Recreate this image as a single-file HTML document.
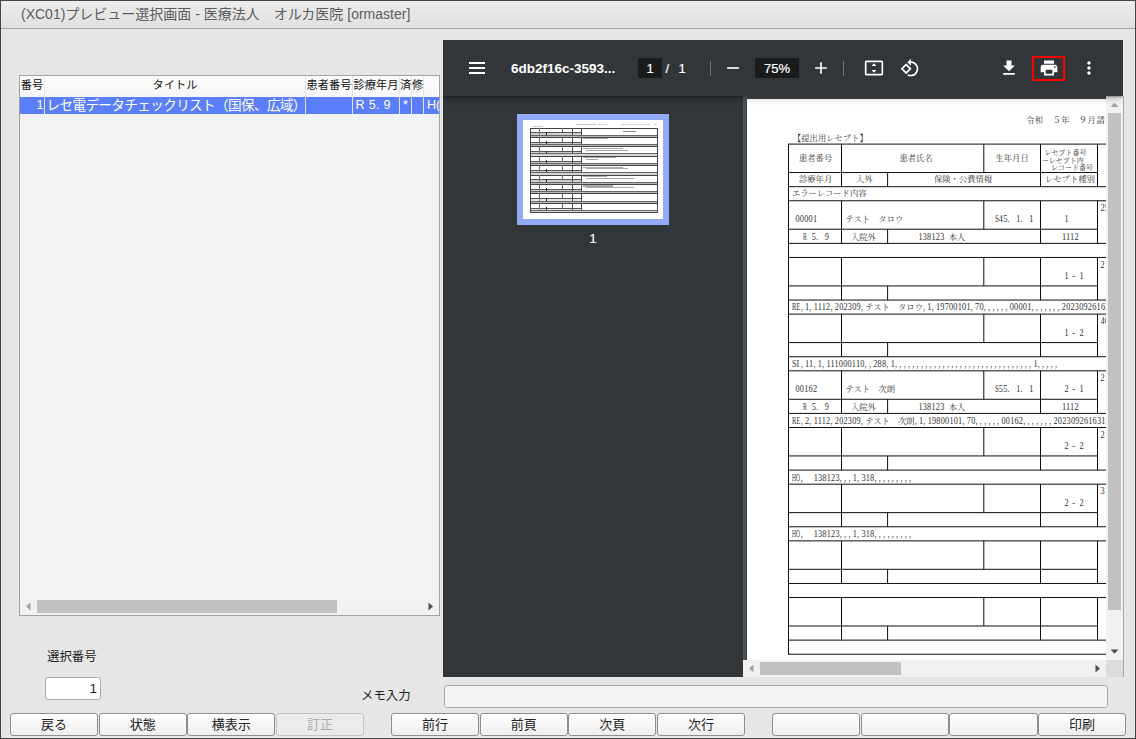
<!DOCTYPE html>
<html lang="ja"><head><meta charset="utf-8"><title>(XC01)プレビュー選択画面</title>
<style>
html,body{margin:0;padding:0}
body{width:1136px;height:739px;overflow:hidden;background:#e6e6e6;position:relative;font-family:"Liberation Sans","Noto Sans CJK JP",sans-serif;color:#222}
.a{position:absolute}
#frame{left:0;top:0;width:1134px;height:737px;border:1px solid #454545;z-index:50;pointer-events:none}
#title{left:1px;top:1px;width:1134px;height:27px;background:linear-gradient(#ececec,#e0e0e0);border-bottom:1px solid #a6a6a6}
#title span{position:absolute;left:20px;top:0;line-height:27px;font-size:14px;color:#5c5c5c;white-space:nowrap}
#list{left:19px;top:75px;width:419px;height:539px;border:1px solid #a2a2a2;background:#f2f2f2;overflow:hidden}
#lhead{left:0;top:0;width:419px;height:21px;background:linear-gradient(#fdfdfd,#f6f6f6)}
.hc{position:absolute;top:-1px;height:21px;line-height:20px;font-size:11.2px;color:#111;text-align:center;white-space:nowrap}
#lrow{left:0;top:21px;width:419px;height:17px;background:#5b7efa}
.rc{position:absolute;top:0;height:17px;line-height:17px;font-size:13.6px;color:#fff;white-space:nowrap}
.vs{position:absolute;top:0;width:1px;height:38px;background:#e4e4e4}
.btn{position:absolute;top:713px;height:20.6px;width:86.2px;border:1px solid #8e8e8e;border-radius:3px;background:linear-gradient(#fdfdfd,#f6f6f6 55%,#ededed);text-align:center;line-height:21.4px;font-size:13px;color:#222;white-space:nowrap}
.btn.dis{color:#a9a9a9;background:#ebebeb;border-color:#c4c4c4}
#pdf{left:443px;top:40px;width:680px;height:637px;background:#525659;overflow:hidden}
#tb{left:0;top:0;width:680px;height:56px;background:#323639;z-index:5;box-shadow:0 -2px 8px rgba(0,0,0,.09),0 4px 8px rgba(0,0,0,.06),0 1px 2px rgba(0,0,0,.3),0 2px 6px rgba(0,0,0,.15)}
#side{left:0;top:56px;width:300px;height:581px;background:#323639}
.ic{position:absolute;width:20px;height:20px;fill:#fff}
.doc{font-family:"Liberation Serif","Noto Serif CJK SC",serif;color:#333;font-size:8.3px;line-height:10px;white-space:nowrap}
.doc .t{position:absolute}
.sb{-webkit-text-stroke:.2px #fff}
.m{letter-spacing:.2px;transform:scaleY(1.18);transform-origin:0 7.8px}.m .c{letter-spacing:2.25px}.m .d{letter-spacing:1.26px}.m .k{display:inline-block;letter-spacing:0;transform:scaleY(.847);transform-origin:0 7.8px}.m .u{display:inline-block;letter-spacing:0;transform-origin:0 50%}
</style></head><body>

<div id="title" class="a"><span>(XC01)プレビュー選択画面 - 医療法人　オルカ医院 [ormaster]</span></div>
<div id="list" class="a">
<div id="lhead" class="a">
<div class="hc" style="left:0px;width:24px">番号</div>
<div class="hc" style="left:25px;width:260px">タイトル</div>
<div class="hc" style="left:286px;width:46px">患者番号</div>
<div class="hc" style="left:333px;width:46px">診療年月</div>
<div class="hc" style="left:380px;width:11px">済</div>
<div class="hc" style="left:392px;width:11px">修</div>
</div>
<div id="lrow" class="a">
<div class="rc" style="left:0;width:23.5px;text-align:right;font-size:12.6px">1</div>
<div class="rc" style="left:26.5px;letter-spacing:-0.63px">レセ電データチェックリスト（国保、広域）</div>
<div class="rc" style="left:335.5px;font-size:12.6px;letter-spacing:0.3px">R 5. 9</div>
<div class="rc" style="left:383px;font-size:12.6px">*</div>
<div class="rc" style="left:407px;font-size:12.6px">H(</div>
</div>
<div class="vs" style="left:24px"></div>
<div class="vs" style="left:285px"></div>
<div class="vs" style="left:332px"></div>
<div class="vs" style="left:379px"></div>
<div class="vs" style="left:391px"></div>
<div class="vs" style="left:403px"></div>
<div class="a" style="left:0;top:522px;width:419px;height:17px;background:#f1f1f1"></div>
<div class="a" style="left:17px;top:524px;width:300px;height:13px;background:#c1c1c1"></div>
<svg class="a" style="left:0;top:522px" width="17" height="17"><path d="M10.5 4.5 L6 8.5 L10.5 12.5Z" fill="#a3a3a3"/></svg>
<svg class="a" style="left:402px;top:522px" width="17" height="17"><path d="M6.5 4.5 L11 8.5 L6.5 12.5Z" fill="#505050"/></svg>
</div>
<div class="a" style="left:47px;top:649px;font-size:12.4px;line-height:16px;color:#222;white-space:nowrap">選択番号</div>
<div class="a" style="left:45px;top:677px;width:54px;height:20.5px;border:1px solid #aaa;border-radius:3px;background:#fff;font-size:13.4px;line-height:21px;text-align:right;"><span style="padding-right:3px">1</span></div>
<div class="a" style="left:361px;top:688px;font-size:12.4px;line-height:16px;color:#222;white-space:nowrap">メモ入力</div>
<div class="a" style="left:444px;top:685px;width:662px;height:21px;border:1px solid #a9a9a9;border-radius:3px;background:#f3f3f3"></div>
<div class="btn" style="left:10px">戻る</div>
<div class="btn" style="left:98.6px">状態</div>
<div class="btn" style="left:187.2px">横表示</div>
<div class="btn dis" style="left:275.8px">訂正</div>
<div class="btn" style="left:391px">前行</div>
<div class="btn" style="left:479.6px">前頁</div>
<div class="btn" style="left:568.2px">次頁</div>
<div class="btn" style="left:656.8px">次行</div>
<div class="btn" style="left:772.2px"></div>
<div class="btn" style="left:860.8px"></div>
<div class="btn" style="left:949.4px"></div>
<div class="btn" style="left:1038px">印刷</div>
<div id="pdf" class="a">
<div class="a doc" style="left:304px;top:59px;width:900px;height:620px;background:#fff;box-shadow:0 0 4px rgba(0,0,0,.45)">
<svg class="a" style="left:0;top:0" width="900" height="620" viewBox="0 0 900 620"><path fill="none" stroke="#0d0d0d" stroke-width="1" d="M41.5 45.1H553M41.5 73.55H350.3M41.5 87.7H553M94.5 45.1V73.55M236.8 45.1V73.55M293.5 45.1V87.7M350.5 45.1V87.7M94.5 73.55V87.7M140.6 73.55V87.7M41.5 101.78H553M41.5 130.23H350.3M41.5 144.38H553M94.5 101.78V130.23M236.8 101.78V130.23M293.5 101.78V144.38M350.5 101.78V144.38M94.5 130.23V144.38M140.6 130.23V144.38M41.5 158.46H553M41.5 186.91H350.3M41.5 201.06H553M94.5 158.46V186.91M236.8 158.46V186.91M293.5 158.46V201.06M350.5 158.46V201.06M94.5 186.91V201.06M140.6 186.91V201.06M41.5 215.14H553M41.5 243.59H350.3M41.5 257.74H553M94.5 215.14V243.59M236.8 215.14V243.59M293.5 215.14V257.74M350.5 215.14V257.74M94.5 243.59V257.74M140.6 243.59V257.74M41.5 271.82H553M41.5 300.27H350.3M41.5 314.42H553M94.5 271.82V300.27M236.8 271.82V300.27M293.5 271.82V314.42M350.5 271.82V314.42M94.5 300.27V314.42M140.6 300.27V314.42M41.5 328.5H553M41.5 356.95H350.3M41.5 371.1H553M94.5 328.5V356.95M236.8 328.5V356.95M293.5 328.5V371.1M350.5 328.5V371.1M94.5 356.95V371.1M140.6 356.95V371.1M41.5 385.18H553M41.5 413.63H350.3M41.5 427.78H553M94.5 385.18V413.63M236.8 385.18V413.63M293.5 385.18V427.78M350.5 385.18V427.78M94.5 413.63V427.78M140.6 413.63V427.78M41.5 441.86H553M41.5 470.31H350.3M41.5 484.46H553M94.5 441.86V470.31M236.8 441.86V470.31M293.5 441.86V484.46M350.5 441.86V484.46M94.5 470.31V484.46M140.6 470.31V484.46M41.5 498.54H553M41.5 526.99H350.3M41.5 541.14H553M94.5 498.54V526.99M236.8 498.54V526.99M293.5 498.54V541.14M350.5 498.54V541.14M94.5 526.99V541.14M140.6 526.99V541.14M41.5 555.22H553M41.5 44.6V555.72"/></svg>
<div class="t " style="left:279px;top:16.8px;letter-spacing:0.5px">令和　５年　９月請求分</div>
<div class="t " style="left:46px;top:34.8px;">【提出用レセプト】</div>
<div class="t " style="left:52px;top:55.1px;">患者番号</div>
<div class="t " style="left:152.5px;top:55.1px;">患者氏名</div>
<div class="t " style="left:248.5px;top:55.1px;">生年月日</div>
<div class="t " style="left:297.5px;top:49.1px;font-size:7px">レセプト番号</div>
<div class="t " style="left:295px;top:56.8px;font-size:7px">ーレセプト内</div>
<div class="t " style="left:304px;top:64.1px;font-size:7px">レコード番号</div>
<div class="t " style="left:52px;top:76.1px;">診療年月</div>
<div class="t " style="left:109px;top:76.1px;">入外</div>
<div class="t " style="left:187px;top:76.1px;">保険・公費情報</div>
<div class="t " style="left:298px;top:76.1px;">レセプト種別</div>
<div class="t " style="left:45px;top:90.3px;">エラーレコード内容</div>
<div class="t m" style="left:48.5px;top:116.1px;">00001</div>
<div class="t " style="left:98.5px;top:116.1px;">テスト　タロウ</div>
<div class="t m" style="left:247.5px;top:116.1px;"><span class="u" style="width:4.33px;transform:scaleX(0.83)">S</span>45<span class="c">. </span>1<span class="c">. </span>1</div>
<div class="t m" style="left:317.5px;top:116.1px;">1</div>
<div class="t m" style="left:353.5px;top:104.8px;">25</div>
<div class="t m" style="left:56px;top:133.8px;"><span class="u" style="width:4.33px;transform:scaleX(0.69)">R</span><span class="c"> </span>5<span class="c">. </span>9</div>
<div class="t " style="left:104px;top:133.8px;">入院外</div>
<div class="t m" style="left:171.4px;top:133.8px;">138123<span class="c"> </span><span class="k">本人</span></div>
<div class="t m" style="left:315px;top:133.8px;">1112</div>
<div class="t m" style="left:317.5px;top:172.8px;">1<span class="d"> - </span>1</div>
<div class="t m" style="left:353.5px;top:161.5px;">2</div>
<div class="t m" style="left:45px;top:204.1px;"><span class="u" style="width:8.66px;transform:scaleX(0.77)">RE</span><span class="c">,</span>1<span class="c">,</span>1112<span class="c">,</span>202309<span class="c">,</span><span class="k">テスト　タロウ</span><span class="c">,</span>1<span class="c">,</span>19700101<span class="c">,</span>70<span class="c">,,,,,,</span>00001<span class="c">,,,,,,,</span>20230926163100</div>
<div class="t m" style="left:317.5px;top:229.5px;">1<span class="d"> - </span>2</div>
<div class="t m" style="left:353.5px;top:218.3px;">40</div>
<div class="t m" style="left:45px;top:260.8px;"><span class="u" style="width:8.66px;transform:scaleX(1.00)">SI</span><span class="c">,</span>11<span class="c">,</span>1<span class="c">,</span>111000110<span class="c">,,</span>288<span class="c">,</span>1<span class="c">,,,,,,,,,,,,,,,,,,,,,,,,,,,,,,,,</span>1<span class="c">,,,,,</span></div>
<div class="t m" style="left:48.5px;top:286.1px;">00162</div>
<div class="t " style="left:98.5px;top:286.1px;">テスト　次朗</div>
<div class="t m" style="left:247.5px;top:286.1px;"><span class="u" style="width:4.33px;transform:scaleX(0.83)">S</span>55<span class="c">. </span>1<span class="c">. </span>1</div>
<div class="t m" style="left:317.5px;top:286.1px;">2<span class="d"> - </span>1</div>
<div class="t m" style="left:353.5px;top:275.0px;">2</div>
<div class="t m" style="left:56px;top:303.8px;"><span class="u" style="width:4.33px;transform:scaleX(0.69)">R</span><span class="c"> </span>5<span class="c">. </span>9</div>
<div class="t " style="left:104px;top:303.8px;">入院外</div>
<div class="t m" style="left:171.4px;top:303.8px;">138123<span class="c"> </span><span class="k">本人</span></div>
<div class="t m" style="left:315px;top:303.8px;">1112</div>
<div class="t m" style="left:45px;top:317.6px;"><span class="u" style="width:8.66px;transform:scaleX(0.77)">RE</span><span class="c">,</span>2<span class="c">,</span>1112<span class="c">,</span>202309<span class="c">,</span><span class="k">テスト　次朗</span><span class="c">,</span>1<span class="c">,</span>19800101<span class="c">,</span>70<span class="c">,,,,,,</span>00162<span class="c">,,,,,,,</span>20230926163100</div>
<div class="t m" style="left:317.5px;top:342.8px;">2<span class="d"> - </span>2</div>
<div class="t m" style="left:353.5px;top:331.8px;">2</div>
<div class="t m" style="left:45px;top:374.5px;white-space:pre"><span class="u" style="width:8.66px;transform:scaleX(0.68)">HO</span><span class="c">,  </span>138123<span class="c">,,,</span>1<span class="c">,</span>318<span class="c">,,,,,,,,,</span></div>
<div class="t m" style="left:317.5px;top:399.5px;">2<span class="d"> - </span>2</div>
<div class="t m" style="left:353.5px;top:388.4px;">3</div>
<div class="t m" style="left:45px;top:431.1px;white-space:pre"><span class="u" style="width:8.66px;transform:scaleX(0.68)">HO</span><span class="c">,  </span>138123<span class="c">,,,</span>1<span class="c">,</span>318<span class="c">,,,,,,,,,</span></div>
</div>
<div class="a" style="left:663px;top:56px;width:17px;height:564px;background:#f1f1f1"></div>
<div class="a" style="left:665px;top:73px;width:13px;height:497px;background:#c1c1c1"></div>
<svg class="a" style="left:663px;top:56px" width="17" height="17"><path d="M4.5 11 L8.5 6.8 L12.5 11Z" fill="#a3a3a3"/></svg>
<svg class="a" style="left:663px;top:603px" width="17" height="17"><path d="M4.5 6.5 L8.5 10.8 L12.5 6.5Z" fill="#505050"/></svg>
<div class="a" style="left:300px;top:620px;width:363px;height:17px;background:#f1f1f1"></div>
<div class="a" style="left:317px;top:622px;width:141px;height:13px;background:#c1c1c1"></div>
<svg class="a" style="left:300px;top:620px" width="17" height="17"><path d="M10.5 4.5 L6 8.5 L10.5 12.5Z" fill="#a3a3a3"/></svg>
<svg class="a" style="left:646px;top:620px" width="17" height="17"><path d="M6.5 4.5 L11 8.5 L6.5 12.5Z" fill="#505050"/></svg>
<div class="a" style="left:663px;top:620px;width:17px;height:17px;background:#dcdcdc"></div>
<div id="side" class="a">
<div class="a" style="left:74px;top:18px;width:140px;height:99px;border:6px solid #93aaf7;background:#fff;overflow:hidden">
<div class="a" style="left:6.82px;top:12.26px;width:51.38px;height:2.36px;background:#cfcfcf"></div>
<div class="a" style="left:6.82px;top:14.62px;width:128.58px;height:2.31px;background:#b7b7b7"></div>
<div class="a" style="left:6.82px;top:7.5px;width:128.58px;height:1px;background:#444"></div>
<div class="a" style="left:6.82px;top:12.26px;width:51.38px;height:1px;background:#555"></div>
<div class="a" style="left:6.82px;top:14.62px;width:128.58px;height:1px;background:#666"></div>
<div class="a" style="left:16px;top:7.5px;width:1px;height:4.76px;background:#666"></div>
<div class="a" style="left:39px;top:7.5px;width:1px;height:4.76px;background:#666"></div>
<div class="a" style="left:49px;top:7.5px;width:1px;height:7.12px;background:#4a4a4a"></div>
<div class="a" style="left:58px;top:7.5px;width:1px;height:7.12px;background:#4a4a4a"></div>
<div class="a" style="left:23px;top:11.76px;width:1px;height:2.86px;background:#222"></div>
<div class="a" style="left:16px;top:12.26px;width:1px;height:2.36px;background:#888"></div>
<div class="a" style="left:6.82px;top:21.68px;width:51.38px;height:2.36px;background:#cfcfcf"></div>
<div class="a" style="left:6.82px;top:24.04px;width:128.58px;height:2.31px;background:#b7b7b7"></div>
<div class="a" style="left:6.82px;top:16.93px;width:128.58px;height:1px;background:#444"></div>
<div class="a" style="left:6.82px;top:21.68px;width:51.38px;height:1px;background:#555"></div>
<div class="a" style="left:6.82px;top:24.04px;width:128.58px;height:1px;background:#666"></div>
<div class="a" style="left:16px;top:16.93px;width:1px;height:4.75px;background:#666"></div>
<div class="a" style="left:39px;top:16.93px;width:1px;height:4.75px;background:#666"></div>
<div class="a" style="left:49px;top:16.93px;width:1px;height:7.11px;background:#4a4a4a"></div>
<div class="a" style="left:58px;top:16.93px;width:1px;height:7.11px;background:#4a4a4a"></div>
<div class="a" style="left:23px;top:21.18px;width:1px;height:2.86px;background:#222"></div>
<div class="a" style="left:16px;top:21.68px;width:1px;height:2.36px;background:#888"></div>
<div class="a" style="left:6.82px;top:31.11px;width:51.38px;height:2.36px;background:#cfcfcf"></div>
<div class="a" style="left:6.82px;top:33.47px;width:128.58px;height:2.31px;background:#d4d4d4"></div>
<div class="a" style="left:6.82px;top:26.35px;width:128.58px;height:1px;background:#444"></div>
<div class="a" style="left:6.82px;top:31.11px;width:51.38px;height:1px;background:#555"></div>
<div class="a" style="left:6.82px;top:33.47px;width:128.58px;height:1px;background:#666"></div>
<div class="a" style="left:16px;top:26.35px;width:1px;height:4.76px;background:#666"></div>
<div class="a" style="left:39px;top:26.35px;width:1px;height:4.76px;background:#666"></div>
<div class="a" style="left:49px;top:26.35px;width:1px;height:7.12px;background:#4a4a4a"></div>
<div class="a" style="left:58px;top:26.35px;width:1px;height:7.12px;background:#4a4a4a"></div>
<div class="a" style="left:23px;top:30.61px;width:1px;height:2.86px;background:#222"></div>
<div class="a" style="left:16px;top:31.11px;width:1px;height:2.36px;background:#888"></div>
<div class="a" style="left:6.82px;top:40.53px;width:51.38px;height:2.37px;background:#cfcfcf"></div>
<div class="a" style="left:6.82px;top:42.9px;width:128.58px;height:2.3px;background:#b7b7b7"></div>
<div class="a" style="left:6.82px;top:35.78px;width:128.58px;height:1px;background:#444"></div>
<div class="a" style="left:6.82px;top:40.53px;width:51.38px;height:1px;background:#555"></div>
<div class="a" style="left:6.82px;top:42.9px;width:128.58px;height:1px;background:#666"></div>
<div class="a" style="left:16px;top:35.78px;width:1px;height:4.75px;background:#666"></div>
<div class="a" style="left:39px;top:35.78px;width:1px;height:4.75px;background:#666"></div>
<div class="a" style="left:49px;top:35.78px;width:1px;height:7.12px;background:#4a4a4a"></div>
<div class="a" style="left:58px;top:35.78px;width:1px;height:7.12px;background:#4a4a4a"></div>
<div class="a" style="left:23px;top:40.03px;width:1px;height:2.87px;background:#222"></div>
<div class="a" style="left:16px;top:40.53px;width:1px;height:2.37px;background:#888"></div>
<div class="a" style="left:6.82px;top:49.96px;width:51.38px;height:2.36px;background:#cfcfcf"></div>
<div class="a" style="left:6.82px;top:52.32px;width:128.58px;height:2.31px;background:#d4d4d4"></div>
<div class="a" style="left:6.82px;top:45.2px;width:128.58px;height:1px;background:#444"></div>
<div class="a" style="left:6.82px;top:49.96px;width:51.38px;height:1px;background:#555"></div>
<div class="a" style="left:6.82px;top:52.32px;width:128.58px;height:1px;background:#666"></div>
<div class="a" style="left:16px;top:45.2px;width:1px;height:4.76px;background:#666"></div>
<div class="a" style="left:39px;top:45.2px;width:1px;height:4.76px;background:#666"></div>
<div class="a" style="left:49px;top:45.2px;width:1px;height:7.12px;background:#4a4a4a"></div>
<div class="a" style="left:58px;top:45.2px;width:1px;height:7.12px;background:#4a4a4a"></div>
<div class="a" style="left:23px;top:49.46px;width:1px;height:2.86px;background:#222"></div>
<div class="a" style="left:16px;top:49.96px;width:1px;height:2.36px;background:#888"></div>
<div class="a" style="left:6.82px;top:59.39px;width:51.38px;height:2.36px;background:#cfcfcf"></div>
<div class="a" style="left:6.82px;top:61.75px;width:128.58px;height:2.31px;background:#b7b7b7"></div>
<div class="a" style="left:6.82px;top:54.63px;width:128.58px;height:1px;background:#444"></div>
<div class="a" style="left:6.82px;top:59.39px;width:51.38px;height:1px;background:#555"></div>
<div class="a" style="left:6.82px;top:61.75px;width:128.58px;height:1px;background:#666"></div>
<div class="a" style="left:16px;top:54.63px;width:1px;height:4.76px;background:#666"></div>
<div class="a" style="left:39px;top:54.63px;width:1px;height:4.76px;background:#666"></div>
<div class="a" style="left:49px;top:54.63px;width:1px;height:7.12px;background:#4a4a4a"></div>
<div class="a" style="left:58px;top:54.63px;width:1px;height:7.12px;background:#4a4a4a"></div>
<div class="a" style="left:23px;top:58.89px;width:1px;height:2.86px;background:#222"></div>
<div class="a" style="left:16px;top:59.39px;width:1px;height:2.36px;background:#888"></div>
<div class="a" style="left:6.82px;top:68.81px;width:51.38px;height:2.36px;background:#cfcfcf"></div>
<div class="a" style="left:6.82px;top:71.17px;width:128.58px;height:2.31px;background:#b7b7b7"></div>
<div class="a" style="left:6.82px;top:64.06px;width:128.58px;height:1px;background:#444"></div>
<div class="a" style="left:6.82px;top:68.81px;width:51.38px;height:1px;background:#555"></div>
<div class="a" style="left:6.82px;top:71.17px;width:128.58px;height:1px;background:#666"></div>
<div class="a" style="left:16px;top:64.06px;width:1px;height:4.75px;background:#666"></div>
<div class="a" style="left:39px;top:64.06px;width:1px;height:4.75px;background:#666"></div>
<div class="a" style="left:49px;top:64.06px;width:1px;height:7.11px;background:#4a4a4a"></div>
<div class="a" style="left:58px;top:64.06px;width:1px;height:7.11px;background:#4a4a4a"></div>
<div class="a" style="left:23px;top:68.31px;width:1px;height:2.86px;background:#222"></div>
<div class="a" style="left:16px;top:68.81px;width:1px;height:2.36px;background:#888"></div>
<div class="a" style="left:6.82px;top:78.24px;width:51.38px;height:2.36px;background:#e6e6e6"></div>
<div class="a" style="left:6.82px;top:80.6px;width:128.58px;height:2.31px;background:#b7b7b7"></div>
<div class="a" style="left:6.82px;top:73.48px;width:128.58px;height:1px;background:#444"></div>
<div class="a" style="left:6.82px;top:78.24px;width:51.38px;height:1px;background:#555"></div>
<div class="a" style="left:6.82px;top:80.6px;width:128.58px;height:1px;background:#666"></div>
<div class="a" style="left:16px;top:73.48px;width:1px;height:4.76px;background:#666"></div>
<div class="a" style="left:39px;top:73.48px;width:1px;height:4.76px;background:#666"></div>
<div class="a" style="left:49px;top:73.48px;width:1px;height:7.12px;background:#4a4a4a"></div>
<div class="a" style="left:58px;top:73.48px;width:1px;height:7.12px;background:#4a4a4a"></div>
<div class="a" style="left:23px;top:77.74px;width:1px;height:2.86px;background:#222"></div>
<div class="a" style="left:16px;top:78.24px;width:1px;height:2.36px;background:#888"></div>
<div class="a" style="left:6.82px;top:87.66px;width:51.38px;height:2.36px;background:#e6e6e6"></div>
<div class="a" style="left:6.82px;top:90.02px;width:128.58px;height:2.31px;background:#d4d4d4"></div>
<div class="a" style="left:6.82px;top:82.91px;width:128.58px;height:1px;background:#444"></div>
<div class="a" style="left:6.82px;top:87.66px;width:51.38px;height:1px;background:#555"></div>
<div class="a" style="left:6.82px;top:90.02px;width:128.58px;height:1px;background:#666"></div>
<div class="a" style="left:16px;top:82.91px;width:1px;height:4.75px;background:#666"></div>
<div class="a" style="left:39px;top:82.91px;width:1px;height:4.75px;background:#666"></div>
<div class="a" style="left:49px;top:82.91px;width:1px;height:7.11px;background:#4a4a4a"></div>
<div class="a" style="left:58px;top:82.91px;width:1px;height:7.11px;background:#4a4a4a"></div>
<div class="a" style="left:23px;top:87.16px;width:1px;height:2.86px;background:#222"></div>
<div class="a" style="left:16px;top:87.66px;width:1px;height:2.36px;background:#888"></div>
<div class="a" style="left:6.82px;top:92.33px;width:128.58px;height:1px;background:#444"></div>
<div class="a" style="left:7px;top:7.5px;width:1px;height:85.83px;background:#444"></div>
<div class="a" style="left:134px;top:7.5px;width:1px;height:85.83px;background:#444"></div>
<div class="a" style="left:53px;top:4.2px;width:20px;height:1.2px;background:#c9c9c9"></div>
<div class="a" style="left:75px;top:4.2px;width:10px;height:1.2px;background:#d2d2d2"></div>
<div class="a" style="left:98px;top:4.2px;width:29px;height:1.2px;background:#cfcfcf"></div>
<div class="a" style="left:131px;top:4.2px;width:3px;height:1.2px;background:#d5d5d5"></div>
<div class="a" style="left:10px;top:5.6px;width:10px;height:1px;background:#c8c8c8"></div>
<div class="a" style="left:100px;top:10.6px;width:13px;height:1.2px;background:#8a8a8a"></div>
<div class="a" style="left:60.2px;top:18.33px;width:25px;height:1.1px;background:#a8a8a8"></div>
<div class="a" style="left:60.2px;top:27.75px;width:40px;height:1.1px;background:#a8a8a8"></div>
<div class="a" style="left:63.2px;top:29.55px;width:42px;height:1.1px;background:#a8a8a8"></div>
<div class="a" style="left:60.2px;top:37.18px;width:33px;height:1.1px;background:#a8a8a8"></div>
<div class="a" style="left:63.2px;top:38.980000000000004px;width:12px;height:1.1px;background:#a8a8a8"></div>
<div class="a" style="left:60.2px;top:46.6px;width:40px;height:1.1px;background:#a8a8a8"></div>
<div class="a" style="left:63.2px;top:48.400000000000006px;width:42px;height:1.1px;background:#a8a8a8"></div>
<div class="a" style="left:60.2px;top:56.03px;width:24px;height:1.1px;background:#a8a8a8"></div>
<div class="a" style="left:63.2px;top:57.830000000000005px;width:48px;height:1.1px;background:#a8a8a8"></div>
<div class="a" style="left:60.2px;top:65.46000000000001px;width:30px;height:1.1px;background:#a8a8a8"></div>
<div class="a" style="left:63.2px;top:67.26px;width:48px;height:1.1px;background:#a8a8a8"></div>
</div>
<div class="a sb" style="left:0;top:134.5px;width:300px;text-align:center;color:#fff;font-size:12.5px;line-height:16px">1</div>
</div>
<div id="tb" class="a">
<div class="a" style="left:26px;top:22px;width:16px;height:2px;background:#fff;box-shadow:0 5px 0 #fff,0 10px 0 #fff"></div>
<div class="a tt" style="left:68px;top:18.6px;line-height:20px;font-size:13.5px;font-weight:bold;color:#fff;white-space:nowrap">6db2f16c-3593...</div>
<div class="a tt sb" style="left:195px;top:18px;width:24px;height:20px;background:#191b1c;color:#fff;font-size:13px;line-height:21.4px;text-align:center">1</div>
<div class="a tt sb" style="left:222.5px;top:18.7px;line-height:20px;font-size:13px;color:#fff">/</div>
<div class="a tt sb" style="left:235.6px;top:18.7px;line-height:20px;font-size:13px;color:#fff">1</div>
<div class="a" style="left:267px;top:21px;width:1px;height:15px;background:#6f7275"></div>
<svg class="ic" style="left:280px;top:18px" viewBox="0 0 24 24"><path d="M19 13H5v-2h14v2z"/></svg>
<div class="a sb" style="left:312px;top:18px;width:44px;height:20px;background:#191b1c;color:#fff;font-size:13px;line-height:21.4px;text-align:center">75%</div>
<svg class="ic" style="left:368px;top:18px" viewBox="0 0 24 24"><path d="M19 13h-6v6h-2v-6H5v-2h6V5h2v6h6v2z"/></svg>
<div class="a" style="left:400px;top:21px;width:1px;height:15px;background:#6f7275"></div>
<svg class="ic" style="left:421px;top:18px" viewBox="0 0 24 24"><path d="M21 3H3c-1.1 0-2 .9-2 2v14c0 1.1.9 2 2 2h18c1.1 0 2-.9 2-2V5c0-1.1-.9-2-2-2zm0 16H3V5h18v14zM12 6.3L9.1 9.6h5.8zM12 17.7l2.9-3.3H9.1z"/></svg>
<svg class="ic" style="left:457px;top:18px" viewBox="0 0 24 24"><path d="M7.34 6.41L.86 12.9l6.49 6.48 6.49-6.48-6.5-6.49zM3.69 12.9l3.66-3.66L11 12.9l-3.66 3.66-3.65-3.66zm15.67-6.26C17.61 4.88 15.3 4 13 4V.76L8.76 5 13 9.24V6c1.79 0 3.58.68 4.95 2.05 2.73 2.73 2.73 7.17 0 9.9C16.58 19.32 14.79 20 13 20c-.97 0-1.94-.21-2.84-.61l-1.49 1.49C10.02 21.62 11.51 22 13 22c2.3 0 4.61-.88 6.36-2.64 3.52-3.51 3.52-9.21 0-12.72z"/></svg>
<svg class="ic" style="left:556px;top:18px" viewBox="0 0 24 24"><path d="M19 9h-4V3H9v6H5l7 7 7-7zM5 18v2h14v-2H5z"/></svg>
<div class="a" style="left:589px;top:16px;width:29px;height:21px;border:2px solid #ff0000"></div>
<svg class="ic" style="left:596px;top:18px" viewBox="0 0 24 24"><path d="M19 8H5c-1.66 0-3 1.34-3 3v6h4v4h12v-4h4v-6c0-1.66-1.34-3-3-3zm-3 11H8v-5h8v5zm3-7c-.55 0-1-.45-1-1s.45-1 1-1 1 .45 1 1-.45 1-1 1zm-1-9H6v4h12V3z"/></svg>
<svg class="ic" style="left:636px;top:18px" viewBox="0 0 24 24"><path d="M12 8c1.1 0 2-.9 2-2s-.9-2-2-2-2 .9-2 2 .9 2 2 2zm0 2c-1.1 0-2 .9-2 2s.9 2 2 2 2-.9 2-2-.9-2-2-2zm0 6c-1.1 0-2 .9-2 2s.9 2 2 2 2-.9 2-2-.9-2-2-2z"/></svg>
</div>
</div>
<div class="a" style="left:1123px;top:96px;width:1px;height:581px;background:#a8a8a8"></div>
<div id="frame" class="a"></div>
</body></html>
